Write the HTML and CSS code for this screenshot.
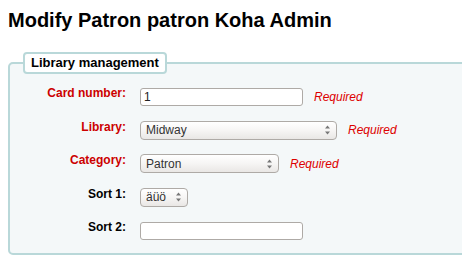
FILE: index.html
```html
<!DOCTYPE html>
<html lang="en">
<head>
  <meta charset="UTF-8">
  <title>Modify Patron patron Koha Admin</title>
  <link rel="stylesheet" href="styles.css">
</head>
<body>
  <h1>Modify Patron patron Koha Admin</h1>

  <fieldset class="rows">
    <legend>Library management</legend>
    <ol>
      <li>
        <label class="required" for="cardnumber">Card number:</label>
        <input type="text" id="cardnumber" class="text long" value="1" />
        <span class="req">Required</span>
      </li>
      <li>
        <label class="required">Library:</label>
        <div class="select lib">
          <span>Midway</span>
          <svg width="7" height="12" viewBox="0 0 7 12"><path d="M1 4.5 L3.5 1.5 L6 4.5Z M1 7.5 L3.5 10.5 L6 7.5Z" fill="#777"/></svg>
        </div>
        <span class="req">Required</span>
      </li>
      <li>
        <label class="required">Category:</label>
        <div class="select cat">
          <span>Patron</span>
          <svg width="7" height="12" viewBox="0 0 7 12"><path d="M1 4.5 L3.5 1.5 L6 4.5Z M1 7.5 L3.5 10.5 L6 7.5Z" fill="#777"/></svg>
        </div>
        <span class="req">Required</span>
      </li>
      <li>
        <label>Sort 1:</label>
        <div class="select sort">
          <span>äüö</span>
          <svg width="7" height="12" viewBox="0 0 7 12"><path d="M1 4.5 L3.5 1.5 L6 4.5Z M1 7.5 L3.5 10.5 L6 7.5Z" fill="#777"/></svg>
        </div>
      </li>
      <li>
        <label for="sort2">Sort 2:</label>
        <input type="text" id="sort2" class="text long" value="" />
      </li>
    </ol>
  </fieldset>

  <!-- next section, only its legend top shows -->
  <fieldset class="rows next">
    <legend class="stub"></legend>
  </fieldset>
</body>
</html>
```

FILE: styles.css
```css
html {
  overflow: hidden;
}
body {
  font-family: "Liberation Sans", Arial, sans-serif;
  font-size: 12px;
  margin: 0;
  padding: 8px;
  color: #000;
}
h1 {
  font-size: 20px;
  font-weight: bold;
  margin: 1px 0 20px 0;
  white-space: nowrap;
}
fieldset.rows {
  width: 560px;
  margin: 0;
  padding: 6px 0 5px 13px;
  border: 2px solid #b9d8d9;
  border-radius: 5px;
  background-color: #f4f8f9;
}
legend {
  font-size: 13px;
  font-weight: bold;
  background-color: #fff;
  border: 2px solid #b9d8d9;
  border-radius: 4px;
  padding: 2px 6px;
  line-height: 14px;
}
legend.stub {
  width: 90px;
  height: 14px;
}
fieldset.next {
  margin-top: 10px;
}
ol {
  list-style: none;
  margin: 0;
  padding: 0;
}
li {
  display: flex;
  align-items: center;
  height: 33.5px;
}
label {
  width: 103px;
  margin-right: 14px;
  text-align: right;
  font-weight: bold;
  line-height: 15px;
  padding-bottom: 6px;
}
label.required {
  color: #cc0000;
}
input.text {
  box-sizing: border-box;
  height: 18px;
  border: 1px solid #aeaaa6;
  border-radius: 3px;
  background: #fff;
  padding: 0 3px;
  font-family: "Liberation Sans", Arial, sans-serif;
  font-size: 12px;
  color: #222;
  outline: none;
}
input.long {
  width: 163px;
}
.select {
  box-sizing: border-box;
  height: 19px;
  display: flex;
  align-items: center;
  justify-content: space-between;
  padding: 0 5px 0 5px;
  border: 1px solid #aeaaa6;
  border-radius: 4px;
  background: linear-gradient(#ffffff, #f6f5f4 50%, #e9e7e5);
  color: #333;
  font-size: 12px;
}
.select svg {
  display: block;
}
.lib {
  width: 197px;
}
.cat {
  width: 139px;
}
.sort {
  width: 48px;
}
.req {
  margin-left: 11px;
  color: #dd0000;
  font-style: italic;
}
```
